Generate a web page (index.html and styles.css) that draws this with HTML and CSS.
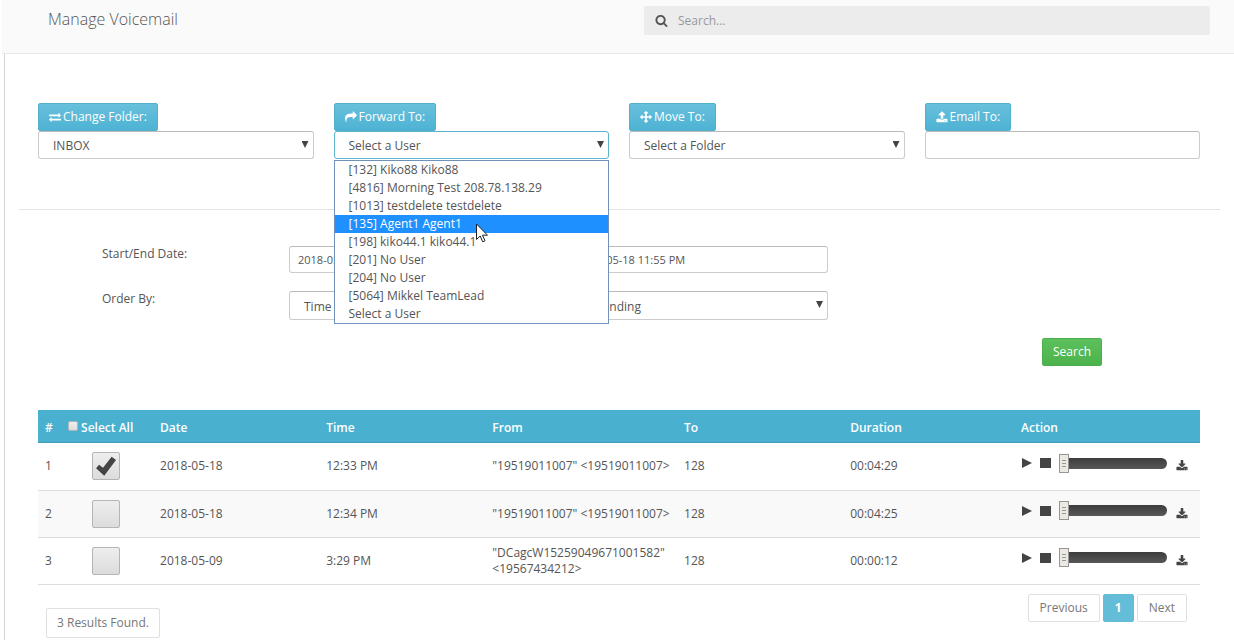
FILE: index.html
```
<!DOCTYPE html>
<html lang="en">
<head>
    <meta charset="UTF-8">
    <meta name="viewport" content="width=device-width, initial-scale=1.0">
    <title>Manage Voicemail</title>
    <link rel="stylesheet" href="styles.css">
</head>
<body>

<!-- icon set -->
<svg class="icon-defs" width="0" height="0" aria-hidden="true">
  <symbol id="i-search" viewBox="0 0 1792 1792"><path d="M1216 832q0-185-131.5-316.5t-316.5-131.5-316.5 131.5-131.5 316.5 131.5 316.5 316.5 131.5 316.5-131.5 131.5-316.5zm512 832q0 52-38 90t-90 38q-54 0-90-38l-343-342q-179 124-399 124-143 0-273.5-55.5t-225-150-150-225-55.5-273.5 55.5-273.5 150-225 225-150 273.5-55.5 273.5 55.5 225 150 150 225 55.5 273.5q0 220-124 399l343 343q37 37 37 90z"/></symbol>
  <symbol id="i-exchange" viewBox="0 0 1792 1792"><path d="M1792 1184v192q0 13-9.5 22.5t-22.5 9.5h-1376v192q0 13-9.5 22.5t-22.5 9.5q-12 0-24-10l-319-320q-9-9-9-22 0-14 9-23l320-320q9-9 23-9 13 0 22.5 9.5t9.5 22.5v192h1376q13 0 22.5 9.5t9.5 22.5zm0-544q0 14-9 23l-320 320q-9 9-23 9-13 0-22.5-9.5t-9.5-22.5v-192h-1376q-13 0-22.5-9.5t-9.5-22.5v-192q0-13 9.5-22.5t22.5-9.5h1376v-192q0-14 9-23t23-9q12 0 24 10l319 319q9 9 9 23z"/></symbol>
  <symbol id="i-share" viewBox="0 0 1792 1792"><path d="M1792 640q0 26-19 45l-512 512q-19 19-45 19t-45-19-19-45v-256h-224q-98 0-175.5 6t-154 21.5-133 42.5-105.5 69.5-80 101-48.5 138.5-17.5 181q0 55 5 123 0 6 2.5 23.5t2.5 26.5q0 15-8.5 25t-23.5 10q-16 0-28-17-7-9-13-22t-13.5-30-10.5-24q-127-285-127-451 0-199 53-333 162-403 875-403h224v-256q0-26 19-45t45-19 45 19l512 512q19 19 19 45z"/></symbol>
  <symbol id="i-arrows" viewBox="0 0 1792 1792"><path d="M1792 896q0 26-19 45l-256 256q-19 19-45 19t-45-19-19-45v-128h-384v384h128q26 0 45 19t19 45-19 45l-256 256q-19 19-45 19t-45-19l-256-256q-19-19-19-45t19-45 45-19h128v-384h-384v128q0 26-19 45t-45 19-45-19l-256-256q-19-19-19-45t19-45l256-256q19-19 45-19t45 19 19 45v128h384v-384h-128q-26 0-45-19t-19-45 19-45l256-256q19-19 45-19t45 19l256 256q19 19 19 45t-19 45-45 19h-128v384h384v-128q0-26 19-45t45-19 45 19l256 256q19 19 19 45z"/></symbol>
  <symbol id="i-upload" viewBox="0 0 1792 1792"><path d="M1344 1472q0-26-19-45t-45-19-45 19-19 45 19 45 45 19 45-19 19-45zm256 0q0-26-19-45t-45-19-45 19-19 45 19 45 45 19 45-19 19-45zm128-224v320q0 40-28 68t-68 28h-1472q-40 0-68-28t-28-68v-320q0-40 28-68t68-28h427q21 56 70.5 92t110.5 36h256q61 0 110.5-36t70.5-92h427q40 0 68 28t28 68zm-325-648q-17 40-59 40h-256v448q0 26-19 45t-45 19h-256q-26 0-45-19t-19-45v-448h-256q-42 0-59-40-17-39 14-69l448-448q18-19 45-19t45 19l448 448q31 30 14 69z"/></symbol>
  <symbol id="i-download" viewBox="0 0 1792 1792"><path d="M1344 1344q0-26-19-45t-45-19-45 19-19 45 19 45 45 19 45-19 19-45zm256 0q0-26-19-45t-45-19-45 19-19 45 19 45 45 19 45-19 19-45zm128-224v320q0 40-28 68t-68 28h-1472q-40 0-68-28t-28-68v-320q0-40 28-68t68-28h465l135 136q58 56 136 56t136-56l136-136h464q40 0 68 28t28 68zm-325-569q17 41-14 70l-448 448q-18 19-45 19t-45-19l-448-448q-31-29-14-70 17-39 59-39h256v-448q0-26 19-45t45-19h256q26 0 45 19t19 45v448h256q42 0 59 39z"/></symbol>
  <symbol id="i-play" viewBox="0 0 12 12"><path d="M1 1l10 5-10 5z"/></symbol>
  <symbol id="i-stop" viewBox="0 0 12 12"><path d="M0 1h11v10h-11z"/></symbol>
</svg>

<header class="topbar">
  <h1>Manage Voicemail</h1>
  <div class="search-box">
    <svg class="icon"><use href="#i-search"/></svg>
    <input type="text" placeholder="Search..." aria-label="Search">
  </div>
</header>

<main class="content">

  <!-- folder / forward / move / email -->
  <div class="actions">
    <div class="action">
      <button type="button" class="btn btn-info"><svg class="icon"><use href="#i-exchange"/></svg> Change Folder:</button>
      <div class="select-wrap">
        <select class="form-control" aria-label="Change Folder"><option>INBOX</option></select>
      </div>
    </div>
    <div class="action">
      <button type="button" class="btn btn-info"><svg class="icon"><use href="#i-share"/></svg> Forward To:</button>
      <div class="select-wrap">
        <select class="form-control focused" aria-label="Forward To"><option>Select a User</option></select>
        <ul class="user-menu">
          <li>[132] Kiko88 Kiko88</li>
          <li>[4816] Morning Test 208.78.138.29</li>
          <li>[1013] testdelete testdelete</li>
          <li class="active">[135] Agent1 Agent1</li>
          <li>[198] kiko44.1 kiko44.1</li>
          <li>[201] No User</li>
          <li>[204] No User</li>
          <li>[5064] Mikkel TeamLead</li>
          <li>Select a User</li>
        </ul>
        <svg class="cursor" viewBox="0 0 12 20"><path d="M.5 1v15.500l3.700-3.500 2.500 5.800 2.300-1-2.500-5.600h5z" fill="#fff" stroke="#222"/></svg>
      </div>
    </div>
    <div class="action">
      <button type="button" class="btn btn-info"><svg class="icon"><use href="#i-arrows"/></svg> Move To:</button>
      <div class="select-wrap">
        <select class="form-control" aria-label="Move To"><option>Select a Folder</option></select>
      </div>
    </div>
    <div class="action">
      <button type="button" class="btn btn-info"><svg class="icon"><use href="#i-upload"/></svg> Email To:</button>
      <input type="text" class="form-control" aria-label="Email To">
    </div>
  </div>

  <hr>

  <!-- filters -->
  <form class="filters">
    <div class="filter-row">
      <label for="startDate">Start/End Date:</label>
      <div class="pair">
        <input type="text" id="startDate" class="form-control date" value="2018-05-01 12:00 AM">
        <input type="text" class="form-control date" aria-label="End date" value="2018-05-18 11:55 PM">
      </div>
    </div>
    <div class="filter-row">
      <label for="orderBy">Order By:</label>
      <div class="pair">
        <div class="select-wrap"><select id="orderBy" class="form-control"><option>Time</option></select></div>
        <div class="select-wrap"><select class="form-control" aria-label="Order direction"><option>Ascending</option></select></div>
      </div>
    </div>
    <button type="button" class="btn btn-success">Search</button>
  </form>

  <!-- voicemail list -->
  <table class="voicemails">
    <colgroup>
      <col class="c-num"><col class="c-check"><col class="c-mid"><col class="c-mid"><col class="c-from"><col class="c-mid"><col class="c-dur"><col class="c-act">
    </colgroup>
    <thead>
      <tr>
        <th>#</th>
        <th><label class="select-all"><input type="checkbox" class="check-sm">Select All</label></th>
        <th>Date</th>
        <th>Time</th>
        <th>From</th>
        <th>To</th>
        <th>Duration</th>
        <th>Action</th>
      </tr>
    </thead>
    <tbody>
      <tr>
        <td>1</td>
        <td class="center"><input type="checkbox" class="check" aria-label="Select voicemail 1" checked></td>
        <td>2018-05-18</td>
        <td>12:33 PM</td>
        <td>"19519011007" &lt;19519011007&gt;</td>
        <td>128</td>
        <td>00:04:29</td>
        <td>
          <div class="player">
            <button type="button" aria-label="Play"><svg><use href="#i-play"/></svg></button>
            <button type="button" aria-label="Stop"><svg><use href="#i-stop"/></svg></button>
            <input type="range" min="0" max="100" value="0" aria-label="Position">
            <a href="#" class="download" aria-label="Download"><svg><use href="#i-download"/></svg></a>
          </div>
        </td>
      </tr>
      <tr>
        <td>2</td>
        <td class="center"><input type="checkbox" class="check" aria-label="Select voicemail 2"></td>
        <td>2018-05-18</td>
        <td>12:34 PM</td>
        <td>"19519011007" &lt;19519011007&gt;</td>
        <td>128</td>
        <td>00:04:25</td>
        <td>
          <div class="player">
            <button type="button" aria-label="Play"><svg><use href="#i-play"/></svg></button>
            <button type="button" aria-label="Stop"><svg><use href="#i-stop"/></svg></button>
            <input type="range" min="0" max="100" value="0" aria-label="Position">
            <a href="#" class="download" aria-label="Download"><svg><use href="#i-download"/></svg></a>
          </div>
        </td>
      </tr>
      <tr>
        <td>3</td>
        <td class="center"><input type="checkbox" class="check" aria-label="Select voicemail 3"></td>
        <td>2018-05-09</td>
        <td>3:29 PM</td>
        <td>"DCagcW15259049671001582" &lt;19567434212&gt;</td>
        <td>128</td>
        <td>00:00:12</td>
        <td>
          <div class="player">
            <button type="button" aria-label="Play"><svg><use href="#i-play"/></svg></button>
            <button type="button" aria-label="Stop"><svg><use href="#i-stop"/></svg></button>
            <input type="range" min="0" max="100" value="0" aria-label="Position">
            <a href="#" class="download" aria-label="Download"><svg><use href="#i-download"/></svg></a>
          </div>
        </td>
      </tr>
    </tbody>
  </table>

  <div class="table-footer">
    <div class="results">3 Results Found.</div>
    <nav class="pagination" aria-label="Pages">
      <a href="#">Previous</a>
      <a href="#" class="current">1</a>
      <a href="#">Next</a>
    </nav>
  </div>

</main>

</body>
</html>
```
FILE: styles.css
```
* {
  box-sizing: border-box;
}

body {
  margin: 0;
  min-height: 100vh;
  display: flex;
  flex-direction: column;
  font-family: "Open Sans", "Liberation Sans", sans-serif;
  font-size: 12px;
  line-height: 16px;
  color: #555;
  background: #fff;
}

input, select, button {
  font: inherit;
  color: inherit;
  margin: 0;
}

.icon-defs {
  position: absolute;
}

.icon {
  width: 12px;
  height: 12px;
  fill: currentColor;
}

/* top bar */
.topbar {
  display: flex;
  justify-content: space-between;
  align-items: flex-start;
  height: 54px;
  margin-left: 2px;
  padding: 6px 24px 0 46px;
  background: #fafafa;
  border-bottom: 1px solid #e9e9e9;
}

.topbar h1 {
  margin: 1px 0 0;
  font-size: 16px;
  font-weight: 300;
  line-height: 24px;
}

.search-box {
  display: flex;
  align-items: center;
  width: 49%;
  max-width: 566px;
  height: 29px;
  padding: 0 11px;
  gap: 10px;
  background: #ececec;
  border-radius: 2px;
}

.search-box .icon {
  width: 13px;
  height: 13px;
}

.search-box input {
  flex: 1;
  padding: 0;
  border: 0;
  outline: 0;
  background: none;
}

.search-box input::placeholder {
  color: #999;
}

/* content */
.content {
  flex: 1;
  margin-left: 4px;
  padding: 49px 34px 0 33px;
  border-left: 1px solid #d5d5d5;
}

.actions {
  display: grid;
  grid-template-columns: repeat(4, 1fr);
  gap: 20px;
}

.btn {
  display: inline-flex;
  align-items: center;
  gap: 2px;
  height: 28px;
  padding: 0 10px;
  border: 1px solid;
  border-radius: 2px;
  color: #fff;
  cursor: pointer;
}

.action .btn {
  display: flex;
}

.btn-info {
  background: linear-gradient(to bottom, #67c0dc, #4eb3d3);
  border-color: #52b0cd;
}

.btn-success {
  background: linear-gradient(to bottom, #5cc05c, #4cb34c);
  border-color: #4cae4c;
}

.form-control {
  display: block;
  width: 100%;
  height: 28px;
  padding: 0 14px;
  border: 1px solid #ccc;
  border-top-color: #bbb;
  border-radius: 3px;
  background: #fff;
  appearance: none;
}

select.form-control {
  padding-top: 2px;
}

.form-control.date {
  padding: 0 8px;
  font-size: 11px;
}

.form-control.focused {
  border-color: #5bb5d1;
}

.select-wrap {
  position: relative;
}

.select-wrap::after {
  content: "";
  position: absolute;
  top: 10px;
  right: 5px;
  width: 7px;
  height: 7px;
  background: #444;
  clip-path: polygon(0 0, 100% 0, 50% 100%);
  pointer-events: none;
}

/* opened user list */
.user-menu {
  position: absolute;
  z-index: 5;
  top: 29px;
  left: 0;
  width: 100%;
  margin: 0;
  padding: 0;
  list-style: none;
  background: #fff;
  border: 1px solid #6f93b8;
}

.user-menu li {
  padding: 0 14px;
  line-height: 18px;
}

.user-menu li.active {
  background: #1e90ff;
  color: #fff;
}

.cursor {
  position: absolute;
  z-index: 6;
  top: 92px;
  left: 142px;
  width: 12px;
  height: 20px;
}

hr {
  margin: 50px -20px 36px -19px;
  border: 0;
  border-top: 1px solid #e3e3e3;
}

/* filters */
.filters {
  display: flex;
  flex-direction: column;
  gap: 18px;
  padding: 0 98px 0 64px;
}

.filter-row {
  display: grid;
  grid-template-columns: 187fr 539fr 274fr;
}

.filter-row .form-control.date {
  height: 27px;
}

.filter-row select.form-control {
  height: 29px;
}

.pair {
  display: grid;
  grid-template-columns: 1fr 1fr;
  gap: 20px;
}

.filters .btn {
  align-self: flex-end;
}

/* table */
.voicemails {
  width: 100%;
  margin-top: 44px;
  table-layout: fixed;
  border-collapse: collapse;
}

.c-num { width: 1.9%; }
.c-check { width: 8%; }
.c-mid { width: 14.3%; }
.c-from { width: 16.5%; }
.c-dur { width: 14.7%; }
.c-act { width: 16%; }

.voicemails th {
  height: 33px;
  padding: 2px 0 0 7px;
  text-align: left;
  font-weight: 600;
  color: #fff;
  background: #4ab0d0;
  box-shadow: inset 0 -1px #459cb8;
}

.voicemails td {
  height: 47px;
  padding: 0 0 0 7px;
  border-bottom: 1px solid #ddd;
}

.voicemails tbody tr:nth-child(even) {
  background: #f9f9f9;
}

.voicemails td.center {
  padding-right: 8px;
}

.select-all {
  display: flex;
  align-items: center;
  gap: 3px;
  white-space: nowrap;
}

.check, .check-sm {
  appearance: none;
  border: 1px solid #b5b5b5;
  border-radius: 2px;
  background: linear-gradient(to bottom, #eee, #dcdcdc);
}

.check {
  display: block;
  width: 28px;
  height: 28px;
  margin: 0 auto;
}

.check-sm {
  width: 10px;
  height: 10px;
  margin: 0 0 4px 1px;
}

.check:checked::before {
  content: "";
  display: block;
  width: 20px;
  height: 20px;
  margin: 3px;
  background: #444;
  clip-path: polygon(0 60%, 15% 43%, 35% 58%, 78% 3%, 100% 19%, 41% 98%);
}

/* player */
.player {
  display: flex;
  align-items: center;
  height: 20px;
  margin-bottom: 6px;
  padding-right: 12px;
}

.player button {
  width: 12px;
  height: 12px;
  margin-right: 7px;
  padding: 0;
  border: 0;
  background: none;
}

.player svg {
  display: block;
  width: 12px;
  height: 12px;
  fill: #444;
}

.player input {
  appearance: none;
  flex: 1;
  min-width: 0;
  max-width: 108px;
  height: 19px;
  background: none;
}

.player input::-webkit-slider-runnable-track {
  height: 11px;
  border-radius: 6px;
  background: linear-gradient(to bottom, #3c3c3c, #585858);
}

.player input::-webkit-slider-thumb {
  appearance: none;
  width: 10px;
  height: 19px;
  margin-top: -4px;
  border: 1px solid #999590;
  background:
    linear-gradient(#999, #999) 50% 5px / 4px 1px no-repeat,
    linear-gradient(#999, #999) 50% 8px / 4px 1px no-repeat,
    linear-gradient(#999, #999) 50% 11px / 4px 1px no-repeat,
    #ece9e4;
}

.download {
  margin: 6px 0 0 9px;
}

/* footer */
.table-footer {
  display: flex;
  justify-content: space-between;
  align-items: flex-start;
  padding: 9px 13px 4px 8px;
}

.results {
  margin-top: 14px;
  padding: 6px 10px;
  border: 1px solid #e0e0e0;
  border-radius: 2px;
  color: #777;
}

.pagination {
  display: flex;
  gap: 3px;
}

.pagination a {
  padding: 5px 11px;
  border: 1px solid #e0e0e0;
  border-radius: 2px;
  color: #777;
  text-decoration: none;
}

.pagination a.current {
  background: #63bcd8;
  border-color: #63bcd8;
  color: #fff;
  font-weight: 700;
}
```
